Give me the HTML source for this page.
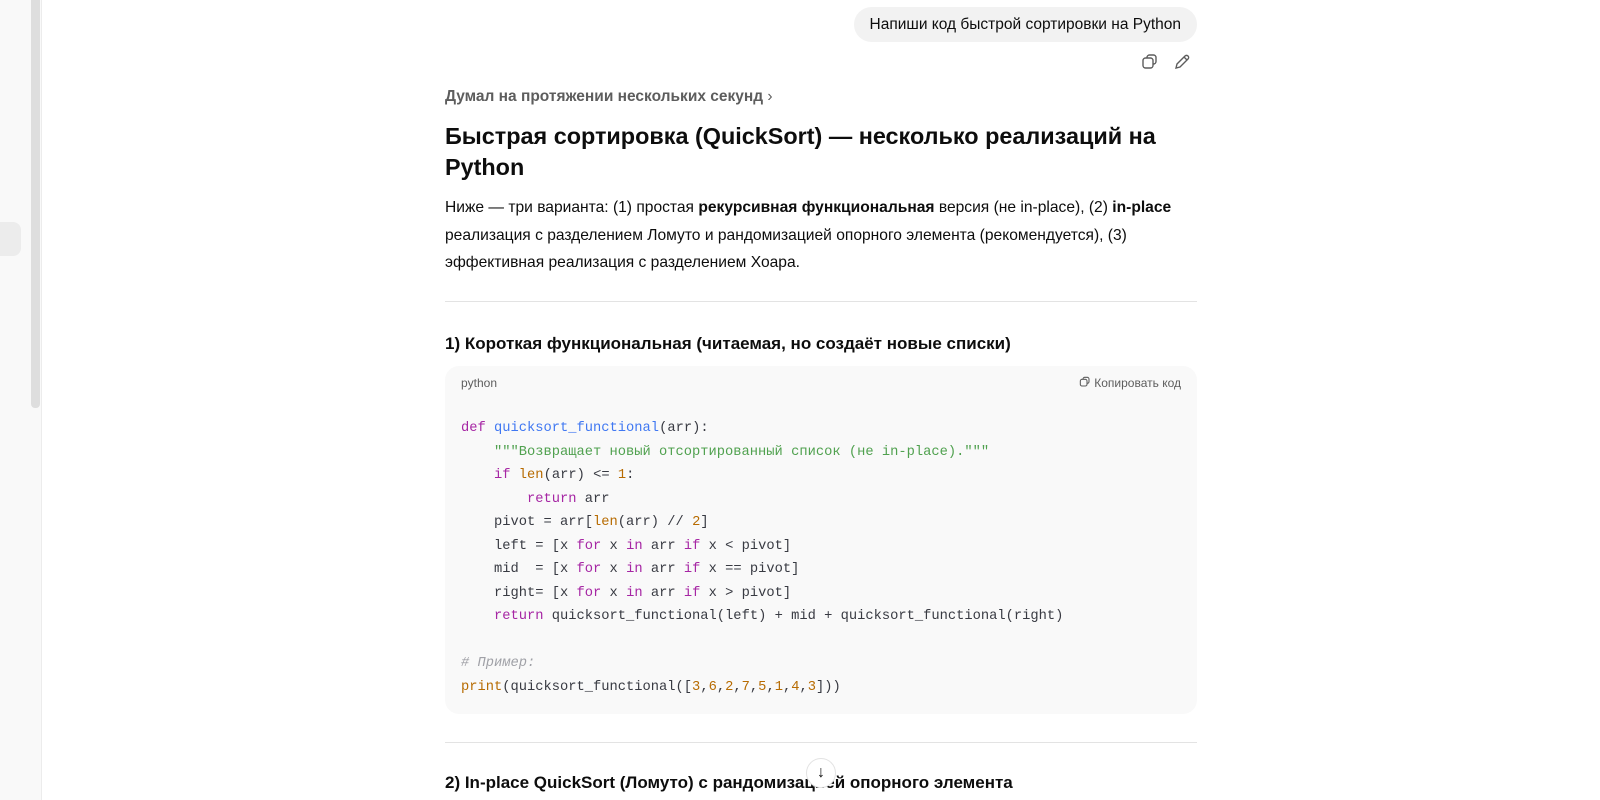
<!DOCTYPE html>
<html><head><meta charset="utf-8"><style>
*{box-sizing:border-box;margin:0;padding:0}
body{width:1600px;height:800px;overflow:hidden;background:#fff;font-family:"Liberation Sans","DejaVu Sans",sans-serif;color:#0d0d0d;position:relative}
.side{position:absolute;left:0;top:0;width:42px;height:800px;background:#f9f9f9;border-right:1px solid #ececec}
.sb{position:absolute;left:31px;top:0;width:9px;height:408px;background:#dedede;border-radius:0 0 4px 4px}
.pill{position:absolute;left:0;top:222px;width:21px;height:34px;background:#ececec;border-radius:0 8px 8px 0}
.user{position:absolute;right:403px;top:7px;height:35px;background:#f2f2f2;border-radius:18px;padding:0 16px;font-size:15.5px;line-height:35px}
.t{position:absolute;left:445px}
.think{top:88px;font-size:15.5px;color:#5d5d5d;font-weight:bold}
h1{position:absolute;left:445px;top:121px;width:740px;font-size:23.4px;line-height:31px;font-weight:bold}
.p{top:194px;width:752px;font-size:15.6px;line-height:27.5px}
.hr{position:absolute;left:445px;width:752px;height:1px;background:#e3e3e3}
h3{position:absolute;left:445px;font-size:17px;font-weight:bold}
.code{position:absolute;left:445px;top:366px;width:752px;height:348px;background:#f9f9f9;border-radius:14px}
.lang{position:absolute;left:16px;top:10px;font-size:12px;color:#5d5d5d}
.cp{position:absolute;right:16px;top:10px;font-size:12px;color:#5d5d5d}
pre{position:absolute;left:16px;top:51px;font-family:"Liberation Mono",monospace;font-size:13.75px;line-height:23.5px;color:#383a42}
.k{color:#a626a4}.f{color:#4078f2}.s{color:#50a14f}.n{color:#b76b01}.c{color:#a0a1a7;font-style:italic}
.down{position:absolute;left:806px;top:758px;width:30px;height:30px;border:1px solid #e3e3e3;border-radius:50%;background:#fff;text-align:center;line-height:28px;font-size:16px}
</style></head><body>
<div class="side"><div class="sb"></div><div class="pill"></div></div>
<div class="user">Напиши код быстрой сортировки на Python</div>
<svg style="position:absolute;left:1141px;top:53px" width="18" height="18" viewBox="0 0 18 18" fill="none" stroke="#5d5d5d" stroke-width="1.4"><rect x="2" y="5" width="10" height="10" rx="2.5"/><path d="M6 5V4.5A2.5 2.5 0 0 1 8.5 2h4A2.5 2.5 0 0 1 15 4.5v4a2.5 2.5 0 0 1-2.5 2.5H12"/></svg>
<svg style="position:absolute;left:1173px;top:53px" width="18" height="18" viewBox="0 0 18 18" fill="none" stroke="#5d5d5d" stroke-width="1.4"><path d="M3 15l1-4 8-8a2 2 0 0 1 3 3l-8 8z M11 4l3 3"/></svg>
<div class="t think">Думал на протяжении нескольких секунд <span style="font-weight:normal">›</span></div>
<h1>Быстрая сортировка (QuickSort) — несколько реализаций на Python</h1>
<div class="t p">Ниже — три варианта: (1) простая <b>рекурсивная функциональная</b> версия (не in-place), (2) <b>in-place</b> реализация с разделением Ломуто и рандомизацией опорного элемента (рекомендуется), (3) эффективная реализация с разделением Хоара.</div>
<div class="hr" style="top:301px"></div>
<h3 style="top:334px">1) Короткая функциональная (читаемая, но создаёт новые списки)</h3>
<div class="code"><div class="lang">python</div><div class="cp"><svg width="12" height="12" viewBox="0 0 18 18" fill="none" stroke="#5d5d5d" stroke-width="1.6" style="vertical-align:-1px"><rect x="2" y="5" width="10" height="10" rx="2.5"/><path d="M6 5V4.5A2.5 2.5 0 0 1 8.5 2h4A2.5 2.5 0 0 1 15 4.5v4a2.5 2.5 0 0 1-2.5 2.5H12"/></svg> Копировать код</div>
<pre><span class="k">def</span> <span class="f">quicksort_functional</span>(arr):
    <span class="s">"""Возвращает новый отсортированный список (не in-place)."""</span>
    <span class="k">if</span> <span class="n">len</span>(arr) &lt;= <span class="n">1</span>:
        <span class="k">return</span> arr
    pivot = arr[<span class="n">len</span>(arr) // <span class="n">2</span>]
    left = [x <span class="k">for</span> x <span class="k">in</span> arr <span class="k">if</span> x &lt; pivot]
    mid  = [x <span class="k">for</span> x <span class="k">in</span> arr <span class="k">if</span> x == pivot]
    right= [x <span class="k">for</span> x <span class="k">in</span> arr <span class="k">if</span> x &gt; pivot]
    <span class="k">return</span> quicksort_functional(left) + mid + quicksort_functional(right)

<span class="c"># Пример:</span>
<span class="n">print</span>(quicksort_functional([<span class="n">3</span>,<span class="n">6</span>,<span class="n">2</span>,<span class="n">7</span>,<span class="n">5</span>,<span class="n">1</span>,<span class="n">4</span>,<span class="n">3</span>]))</pre></div>
<div class="hr" style="top:742px"></div>
<h3 style="top:773px">2) In-place QuickSort (Ломуто) с рандомизацией опорного элемента</h3>
<div class="down">↓</div>
</body></html>
